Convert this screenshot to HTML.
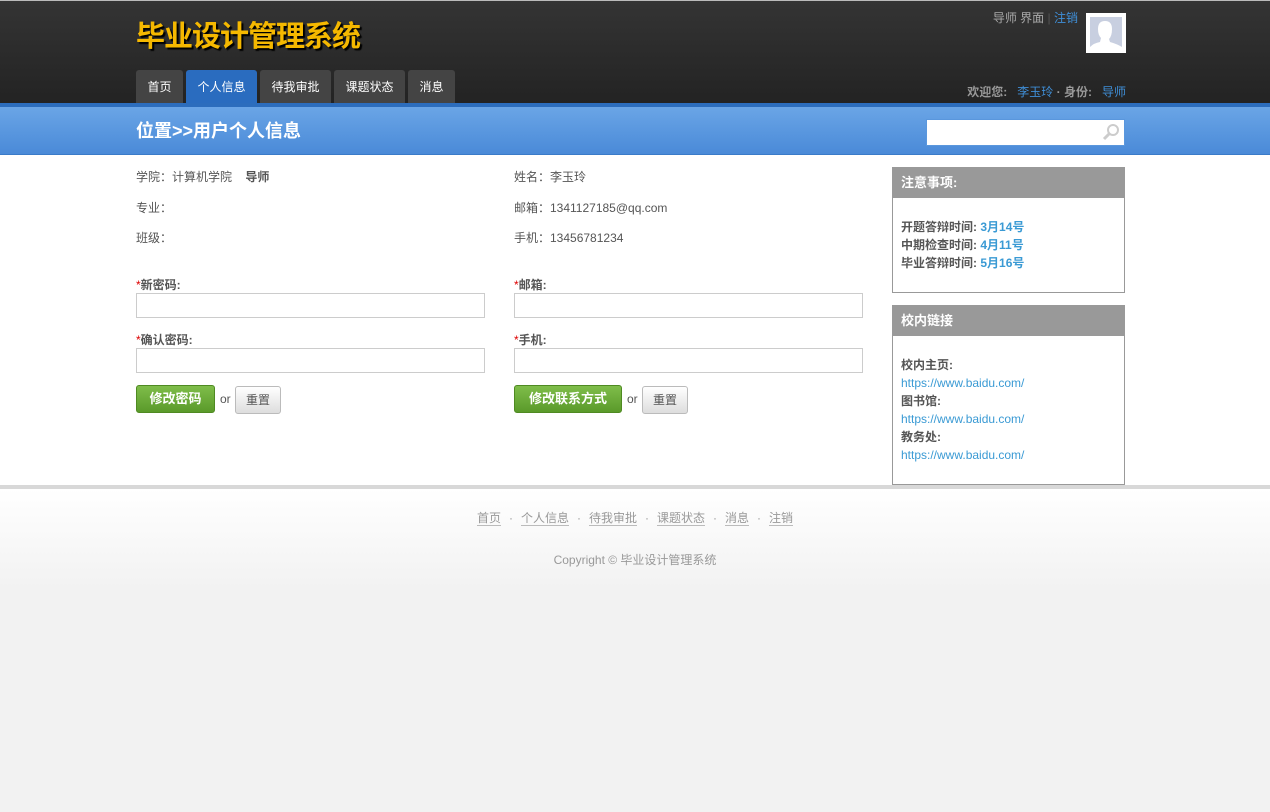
<!DOCTYPE html>
<html><head><meta charset="utf-8"><style>
*{margin:0;padding:0;box-sizing:border-box}
body{width:1270px;height:812px;background:#f2f2f2;font-family:"Liberation Sans","Noto Sans CJK SC",sans-serif;font-size:12px;color:#555;position:relative;overflow:hidden}
.hdr{position:absolute;left:0;top:0;width:1270px;height:103px;background:linear-gradient(#343434,#232323);border-top:1px solid #bbb}
.title{position:absolute;left:136px;top:12px;font-size:29px;font-weight:bold;color:#f5b800;text-shadow:2px 2px 1px #000;letter-spacing:-1px}
.tabs{position:absolute;left:136px;top:69px;display:flex}
.tab{height:34px;line-height:34px;margin-right:3px;background:#444;color:#fff;font-size:12px;border-radius:3px 3px 0 0;text-align:center}
.tab.on{background:#2a6cbf}
.tr{position:absolute;right:192px;top:8px;color:#aaa;font-size:12px}
.tr span{color:#3f8fd8}
.av{position:absolute;left:1086px;top:12px;width:40px;height:40px;background:#fff;padding:4px}
.av div{width:32px;height:32px;background:#c8cfe0;overflow:hidden;position:relative}
.wel{position:absolute;right:144px;top:82px;color:#999;font-weight:bold}
.wel span{color:#3f8fd8;font-weight:normal}
.band{position:absolute;left:0;top:103px;width:1270px;height:52px;background:linear-gradient(#6aa5e6,#4a8ad8);border-top:4px solid #2c6dbd;border-bottom:1px solid #3a7bc8}
.band h2{position:absolute;left:136px;top:10px;color:#fff;font-size:18px}
.search{position:absolute;left:926px;top:12px;width:199px;height:27px;background:#fff;border:1px solid #5a97dd}
.main{position:absolute;left:0;top:155px;width:1270px;height:330px;background:#fff}
.g{position:absolute;top:485px;left:0;width:1270px;height:4px;background:#d8d8d8}
.foot{position:absolute;top:489px;left:0;width:1270px;height:100px;background:linear-gradient(#fff,#f2f2f2)}
.t{position:absolute;font-size:12px;color:#555}
b.l{font-weight:bold;color:#555}
.r{color:#d00}
.inp{position:absolute;width:349px;height:25px;border:1px solid #ccc;background:#fff}
.btn{position:absolute;height:28px;line-height:26px;color:#fff;font-weight:bold;font-size:13px;text-align:center;background:linear-gradient(#7fbd4a,#5a9a2a);border:1px solid #4f8a22;border-radius:3px}
.rb{position:absolute;height:28px;line-height:26px;color:#555;font-size:12px;width:46px;text-align:center;background:linear-gradient(#fff,#ddd);border:1px solid #bbb;border-radius:3px}
.box{position:absolute;left:892px;width:233px;border:1px solid #999;background:#fff}
.box h3{background:#999;color:#fff;font-size:13px;height:30px;line-height:30px;padding-left:8px}
.box .c{padding:20px 8px 0;line-height:18px;font-weight:bold}
.blue{color:#3a9ad4}
.fl{position:absolute;top:510px;left:0;width:1270px;text-align:center;color:#999;font-size:12px}
.fl a{color:#999;text-decoration:none;border-bottom:1px solid #bbb;margin:0 8px}
</style></head><body>
<div class="hdr">
<div class="title">毕业设计管理系统</div>
<div class="tabs"><div class="tab" style="width:47px">首页</div><div class="tab on" style="width:71px">个人信息</div><div class="tab" style="width:71px">待我审批</div><div class="tab" style="width:71px">课题状态</div><div class="tab" style="width:47px">消息</div></div>
<div class="tr">导师 界面 <span style="color:#555">|</span> <span>注销</span></div>
<div class="av"><div><svg width="32" height="32"><path d="M0 32 L0 30 Q4 26 10 25 L11 21 Q8 18 8 12 Q8 4 15 4 Q22 4 22 12 Q22 19 19 22 L20 25 Q27 27 32 30 L32 32Z" fill="#fff"/></svg></div></div>
<div class="wel">欢迎您: &nbsp;<span>&nbsp;李玉玲</span> · 身份: &nbsp;<span>&nbsp;导师</span></div>
</div>
<div class="band"><h2>位置&gt;&gt;用户个人信息</h2>
<div class="search"><svg style="position:absolute;right:4px;top:3px" width="18" height="18"><circle cx="11" cy="7" r="5" fill="none" stroke="#ccc" stroke-width="2"/><path d="M7.5 10.5 L2 16" stroke="#ccc" stroke-width="3"/></svg></div></div>
<div class="main"></div>
<div class="t" style="left:136px;top:168px">学院：计算机学院 &nbsp; &nbsp;<b class="l">导师</b></div>
<div class="t" style="left:136px;top:199px">专业：</div>
<div class="t" style="left:136px;top:229px">班级：</div>
<div class="t" style="left:514px;top:168px">姓名：李玉玲</div>
<div class="t" style="left:514px;top:199px">邮箱：1341127185@qq.com</div>
<div class="t" style="left:514px;top:229px">手机：13456781234</div>
<div class="t" style="left:136px;top:276px"><span class="r">*</span><b class="l">新密码:</b></div>
<div class="inp" style="left:136px;top:293px"></div>
<div class="t" style="left:136px;top:331px"><span class="r">*</span><b class="l">确认密码:</b></div>
<div class="inp" style="left:136px;top:348px"></div>
<div class="t" style="left:514px;top:276px"><span class="r">*</span><b class="l">邮箱:</b></div>
<div class="inp" style="left:514px;top:293px"></div>
<div class="t" style="left:514px;top:331px"><span class="r">*</span><b class="l">手机:</b></div>
<div class="inp" style="left:514px;top:348px"></div>
<div class="btn" style="left:136px;top:385px;width:79px">修改密码</div>
<div class="t" style="left:220px;top:392px">or</div>
<div class="rb" style="left:235px;top:386px">重置</div>
<div class="btn" style="left:514px;top:385px;width:108px">修改联系方式</div>
<div class="t" style="left:627px;top:392px">or</div>
<div class="rb" style="left:642px;top:386px">重置</div>
<div class="box" style="top:167px;height:126px"><h3>注意事项:</h3><div class="c">开题答辩时间: <span class="blue">3月14号</span><br>中期检查时间: <span class="blue">4月11号</span><br>毕业答辩时间: <span class="blue">5月16号</span></div></div>
<div class="box" style="top:305px;height:180px"><h3>校内链接</h3><div class="c">校内主页:<br><span class="blue" style="font-weight:normal">https://www.baidu.com/</span><br>图书馆:<br><span class="blue" style="font-weight:normal">https://www.baidu.com/</span><br>教务处:<br><span class="blue" style="font-weight:normal">https://www.baidu.com/</span></div></div>
<div class="g"></div>
<div class="foot"></div>
<div class="fl" style="top:509px"><a>首页</a>·<a>个人信息</a>·<a>待我审批</a>·<a>课题状态</a>·<a>消息</a>·<a>注销</a></div>
<div class="fl" style="top:551px">Copyright © 毕业设计管理系统</div>
</body></html>
